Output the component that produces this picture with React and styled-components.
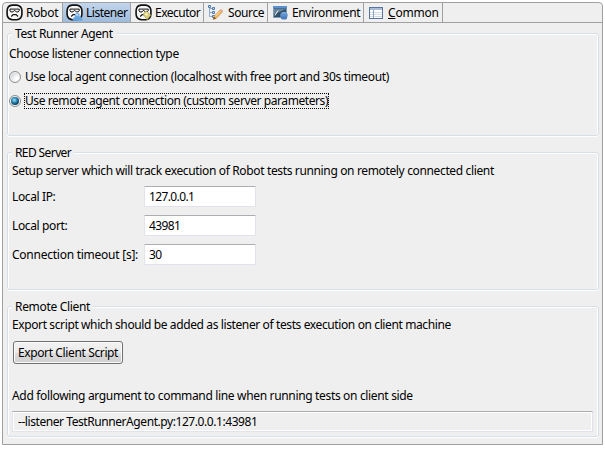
import React, { useState } from "react";
import styled, { createGlobalStyle, css } from "styled-components";

const GlobalStyle = createGlobalStyle`
  * { box-sizing: border-box; }
  body {
    margin: 0;
    background: #fff;
    color: #000;
    font-family: "Noto Sans", "Open Sans", sans-serif;
    font-size: 12px;
    line-height: 16px;
  }
`;

const Frame = styled.main`
  display: flex;
  flex-direction: column;
  width: 601px;
  height: 443px;
  margin: 2px 0 0 2px;
  background: #efefef;
  border: 1px solid #a0a0a0;
  border-top-left-radius: 4px;
  border-top-right-radius: 4px;
  overflow: hidden;
  white-space: pre;
`;

const TabBar = styled.nav`
  display: flex;
  flex: none;
  height: 20px;
  border-bottom: 1px solid #a0a0a0;
`;

const Tab = styled.div`
  display: flex;
  flex: none;
  align-items: center;
  gap: ${(p) => p.$gap || 3}px;
  width: ${(p) => p.$width}px;
  padding-left: ${(p) => p.$inset || 3}px;
  border-right: 1px solid #a0a0a0;
  ${(p) =>
    p.$active &&
    css`
      background: linear-gradient(#c3d6ec, #9dbbdc);
    `}

  svg {
    flex: none;
  }
`;

const Label = styled.span`
  letter-spacing: ${(p) => p.$track || -0.37}px;
`;

const Body = styled.div`
  display: flex;
  flex-direction: column;
  gap: 16px;
  padding: 10px 3px 0 4px;
`;

const Group = styled.section`
  display: flex;
  flex-direction: column;
  align-items: flex-start;
  height: ${(p) => p.$height}px;
  padding-left: ${(p) => p.$inset}px;
  border: 1px solid #d5dfe5;
  border-radius: 3px;
  box-shadow: inset 1px 1px #fff, inset -1px 0 #fff, 0 1px #fff;
`;

const Legend = styled.h2`
  margin: -8px 0 0 ${(p) => p.$shift}px;
  padding: 0 3px;
  background: #efefef;
  font-size: 12px;
  font-weight: 400;
  line-height: 16px;
`;

const Line = styled.p`
  margin: ${(p) => p.$gap}px 0 0;
`;

const Choice = styled.div`
  display: flex;
  align-items: center;
  gap: 3px;
  height: 16px;
  margin-top: ${(p) => p.$gap}px;
`;

const Radio = styled.button`
  display: flex;
  align-items: center;
  justify-content: center;
  width: 12px;
  height: 12px;
  padding: 0;
  border: 1px solid #8e8f8f;
  border-radius: 50%;
  background: radial-gradient(circle at 70% 70%, #fff 0 15%, #d8dbde 65%, #c5c9cd);
  box-shadow: inset 0 0 0 1px #f5f5f5;
`;

const Dot = styled.span`
  width: 8px;
  height: 8px;
  flex: none;
  border-radius: 50%;
  background: radial-gradient(circle at 42% 38%, #a8e4f5, #2585b3 38%, #103a5c 72%);
`;

const ChoiceText = styled.span`
  height: 16px;
  line-height: 14px;
  border: 1px dotted ${(p) => (p.$focused ? "#000" : "transparent")};
  letter-spacing: ${(p) => p.$track}px;
`;

const Form = styled.div`
  display: grid;
  grid-template-columns: 132px 112px;
  grid-auto-rows: 21px;
  row-gap: 8px;
  align-items: center;
  margin-top: 7px;
`;

const Field = styled.input`
  width: 112px;
  height: 21px;
  padding: 0 4px;
  border: 1px solid #e2e3ea;
  border-top-color: #abadb3;
  border-radius: 1px;
  outline: 0;
  background: #fff;
  color: #000;
  font: inherit;
  letter-spacing: -0.62px;
`;

const ExportButton = styled.button`
  width: 110px;
  height: 23px;
  margin: 8px 0 0 1px;
  padding: 0;
  border: 1px solid #707070;
  border-radius: 3px;
  background: linear-gradient(#f2f2f2, #ebebeb 50%, #dddddd 50%, #cfcfcf);
  box-shadow: inset 0 0 0 1px #fbfbfb;
  color: #000;
  font: inherit;
  line-height: 20px;
`;

const Command = styled.output`
  width: 581px;
  height: 21px;
  margin-top: 7px;
  padding-left: 5px;
  border: 1px solid #e2e3ea;
  border-top-color: #abadb3;
  box-shadow: inset 0 0 0 1px #fff;
  line-height: 20px;
`;

function RobotIcon({ children }) {
  return (
    <svg width="17" height="17" viewBox="0 0 17 17" fill="none">
      <path
        d="M6.2 1.1h4.6c2.8.4 4.9 2.5 5.1 5.3v3.9c-.3 3.1-2.2 5.1-5.2 5.4H6.4C3.3 15.4 1.3 13.4 1.1 10.4V6.5C1.3 3.5 3.2 1.4 6.2 1.1Z"
        fill="#f7f7f7"
        stroke="#111"
        strokeWidth="1.6"
      />
      <path d="M4 5.1h9.2v1.8l-1 1h-2L8.6 6.2 7 7.9H4.9L4 6.9Z" stroke="#111" strokeWidth="1" />
      <path d="m5.2 12.5 1.9-1.9h3l2 1.9" stroke="#111" strokeWidth="1.1" />
      {children}
    </svg>
  );
}

function ListenerIcon() {
  return (
    <RobotIcon>
      <path d="M6.6 16.8c-.1-2.3.8-3.6 2.6-4.1l-.4-2.5 2.2-1.4 2.6 1-.3 2.4c2.2.4 3.3 1.8 3.4 4.6Z" fill="#69a6df" />
      <path d="m9.6 9.7 2.9.2-.6 2.1-1.8-.2Z" fill="#b8d9f5" />
    </RobotIcon>
  );
}

function ExecutorIcon() {
  return (
    <RobotIcon>
      <path d="m8 10.2 3-3.4 4.8 4.3-3.7 4.7Z" fill="#d9ce77" stroke="#a79e57" strokeWidth=".6" />
      <path d="m9.6 10.2 1.7-1.9 2 1.7-1.5 2Z" fill="#f2edba" />
    </RobotIcon>
  );
}

function SourceIcon() {
  return (
    <svg width="17" height="17" viewBox="0 0 17 17" fill="none">
      <path d="M2.5 3v9.5H6M2.5 4.5H5m-2.5 4H6" stroke="#8eabc9" />
      <path d="M1.5 1.5h2v2h-2Zm4 2h2v2h-2Zm0 4h2v2h-2Zm0 4h2v2h-2Z" fill="#c7daf0" stroke="#537db2" />
      <path d="m7 12.5 6-6.4 2.3 2-6.2 6.4-2.8.8Z" fill="#efb45f" stroke="#c67e35" strokeWidth=".6" />
      <path d="m8 12.7 5.5-5.8" stroke="#ffe0a0" />
      <path d="m6.2 15.4.8-2.9 2.1 2Z" fill="#7c5735" />
      <path d="m13 6.1 1.2-1 2.1 1.8-1 1.2Z" fill="#e4a7a0" />
    </svg>
  );
}

function EnvironmentIcon() {
  return (
    <svg width="17" height="17" viewBox="0 0 17 17" fill="none">
      <path d="M1.5 2.5h13v11h-13Z" fill="#314e68" stroke="#7e9cb8" />
      <path d="M1 2h14v2.5H1Z" fill="#5b91cd" />
      <path d="M2 5h12L2 10.5Z" fill="#688395" />
      <path d="m3 11.5 3-5" stroke="#eef4f5" />
      <ellipse cx="12" cy="11.3" rx="3.7" ry="3.5" fill="#5f91ce" />
      <path d="M9 12.5h6v2.2c-1.5 1.2-4.3 1.2-6 0Z" fill="#4b7ebc" />
      <path d="M9.7 9.7c1-1.3 3.4-1.4 4.5 0" stroke="#95bbe4" />
    </svg>
  );
}

function CommonIcon() {
  return (
    <svg width="16" height="16" viewBox="0 0 16 16" fill="none" shapeRendering="crispEdges">
      <path d="M1.5 2.5h13v11h-13Z" fill="#fff" stroke="#59759d" />
      <path d="M2 3h12v2H2Z" fill="#a9bdd8" />
      <path d="M2 7.5h12m-12 2h12m-12 2h12" stroke="#d1dbe6" />
      <path d="M5.5 5v8" stroke="#8ba3c2" />
    </svg>
  );
}

const tabs = [
  { name: "Robot", Icon: RobotIcon, width: 60, track: -0.3 },
  { name: "Listener", Icon: ListenerIcon, width: 68, track: -0.5 },
  { name: "Executor", Icon: ExecutorIcon, width: 73, inset: 4, track: -0.5 },
  { name: "Source", Icon: SourceIcon, width: 64, gap: 4, track: -0.4 },
  { name: "Environment", Icon: EnvironmentIcon, width: 96, inset: 4, track: -0.38 },
  { name: "Common", Icon: CommonIcon, width: 79, inset: 4, gap: 4, track: -0.2 },
];

const choices = [
  { id: "local", text: "Use local agent connection (localhost with free port and 30s timeout)", gap: 7, track: -0.34 },
  { id: "remote", text: "Use remote agent connection (custom server parameters)", gap: 8, track: -0.42 },
];

export default function App() {
  const [connection, setConnection] = useState("remote");

  return (
    <>
      <GlobalStyle />
      <Frame>
        <TabBar>
          {tabs.map(({ name, Icon, width, inset, gap, track }) => (
            <Tab key={name} $width={width} $inset={inset} $gap={gap} $active={name === "Listener"}>
              <Icon />
              <Label $track={track}>{name === "Common" ? <><u>C</u>ommon</> : name}</Label>
            </Tab>
          ))}
        </TabBar>
        <Body>
          <Group $height={103} $inset={1}>
            <Legend $shift={3}><Label>Test Runner Agent</Label></Legend>
            <Line $gap={4}><Label $track={-0.35}>Choose listener connection type</Label></Line>
            {choices.map(({ id, text, gap, track }) => (
              <Choice key={id} $gap={gap}>
                <Radio role="radio" aria-checked={connection === id} onClick={() => setConnection(id)}>
                  {connection === id && <Dot />}
                </Radio>
                <ChoiceText $focused={connection === id} $track={track}>{text}</ChoiceText>
              </Choice>
            ))}
          </Group>
          <Group $height={138} $inset={4}>
            <Legend $shift={0}><Label $track={-0.6}>RED Server</Label></Legend>
            <Line $gap={2}>
              <Label $track={-0.355}>Setup server which will track execution of Robot tests running on remotely connected client</Label>
            </Line>
            <Form>
              <Label>Local IP:</Label>
              <Field defaultValue="127.0.0.1" />
              <Label>Local port:</Label>
              <Field defaultValue="43981" />
              <Label $track={-0.25}>Connection timeout [s]:</Label>
              <Field defaultValue="30" />
            </Form>
          </Group>
          <Group $height={131} $inset={4}>
            <Legend $shift={0}><Label $track={-0.32}>Remote Client</Label></Legend>
            <Line $gap={2}>
              <Label $track={-0.385}>Export script which should be added as listener of tests execution on client machine</Label>
            </Line>
            <ExportButton><Label>Export Client Script</Label></ExportButton>
            <Line $gap={24}>
              <Label $track={-0.335}>Add following argument to command line when running tests on client side</Label>
            </Line>
            <Command><Label $track={-0.43}>--listener TestRunnerAgent.py:127.0.0.1:43981</Label></Command>
          </Group>
        </Body>
      </Frame>
    </>
  );
}
